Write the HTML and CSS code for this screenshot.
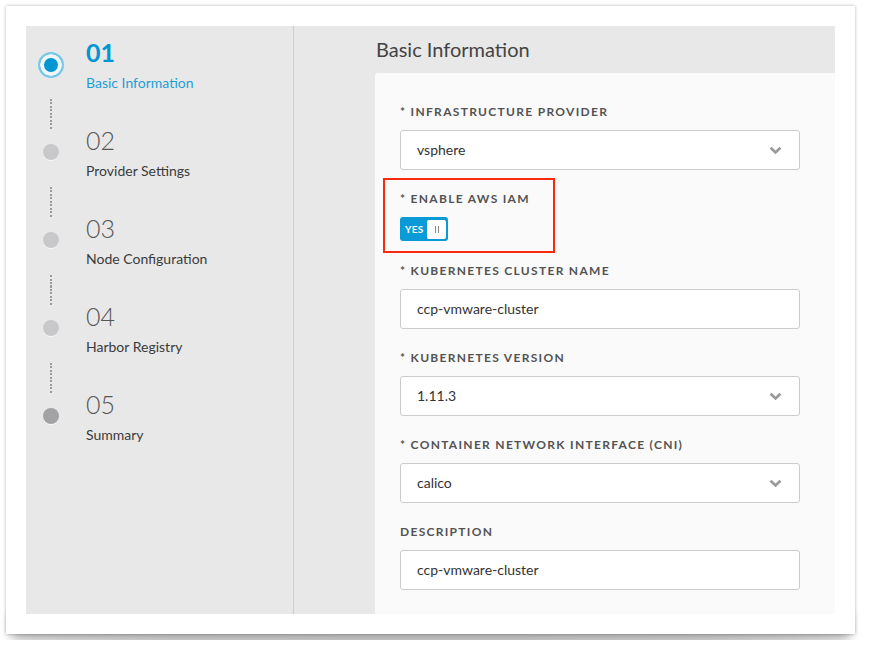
FILE: index.html
```html
<!DOCTYPE html>
<html lang="en">
<head>
<meta charset="utf-8">
<title>Basic Information</title>
<link rel="stylesheet" href="styles.css">
</head>
<body>
<div class="page">
  <div class="sheet">
    <div class="wizard">
      <aside class="steps">
        <div class="step active">
          <div class="rail"><span class="marker"></span><span class="connector"></span></div>
          <div class="step-text"><div class="step-num">01</div><div class="step-label">Basic Information</div></div>
        </div>
        <div class="step">
          <div class="rail"><span class="marker"></span><span class="connector"></span></div>
          <div class="step-text"><div class="step-num">02</div><div class="step-label">Provider Settings</div></div>
        </div>
        <div class="step">
          <div class="rail"><span class="marker"></span><span class="connector"></span></div>
          <div class="step-text"><div class="step-num">03</div><div class="step-label">Node Configuration</div></div>
        </div>
        <div class="step">
          <div class="rail"><span class="marker"></span><span class="connector"></span></div>
          <div class="step-text"><div class="step-num">04</div><div class="step-label">Harbor Registry</div></div>
        </div>
        <div class="step last">
          <div class="rail"><span class="marker"></span></div>
          <div class="step-text"><div class="step-num">05</div><div class="step-label">Summary</div></div>
        </div>
      </aside>
      <main class="content">
        <h2 class="title">Basic Information</h2>
        <section class="card">
          <div class="field">
            <div class="label">* Infrastructure Provider</div>
            <div class="input select">vsphere
              <svg class="chevron" width="13" height="9" viewBox="0 0 13 9"><polyline points="1.6,1.8 6.5,6.4 11.4,1.8" fill="none" stroke="#9a9a9a" stroke-width="2.8"/></svg>
            </div>
          </div>
          <div class="field highlight">
            <div class="label">* Enable AWS IAM</div>
            <div class="toggle"><span class="toggle-text">YES</span><span class="knob"><i></i><i></i></span></div>
          </div>
          <div class="field">
            <div class="label">* Kubernetes Cluster Name</div>
            <div class="input">ccp-vmware-cluster</div>
          </div>
          <div class="field">
            <div class="label">* Kubernetes Version</div>
            <div class="input select">1.11.3
              <svg class="chevron" width="13" height="9" viewBox="0 0 13 9"><polyline points="1.6,1.8 6.5,6.4 11.4,1.8" fill="none" stroke="#9a9a9a" stroke-width="2.8"/></svg>
            </div>
          </div>
          <div class="field">
            <div class="label">* Container Network Interface (CNI)</div>
            <div class="input select">calico
              <svg class="chevron" width="13" height="9" viewBox="0 0 13 9"><polyline points="1.6,1.8 6.5,6.4 11.4,1.8" fill="none" stroke="#9a9a9a" stroke-width="2.8"/></svg>
            </div>
          </div>
          <div class="field">
            <div class="label">Description</div>
            <div class="input">ccp-vmware-cluster</div>
          </div>
        </section>
      </main>
    </div>
  </div>
</div>
</body>
</html>
```

FILE: styles.css
```css
* { box-sizing: border-box; }

html {
  background: #ffffff;
}

body {
  margin: 0;
  padding: 0;
  font-family: Lato, "Open Sans", "Liberation Sans", sans-serif;
}

.page {
  padding: 6px;
}

.sheet {
  position: relative;
  width: 849px;
  height: 628px;
  padding: 20px;
  background: #ffffff;
  box-shadow: 0 0 3px rgba(0, 0, 0, 0.3);
}

.sheet::before {
  content: "";
  position: absolute;
  z-index: -1;
  left: 5px;
  right: 5px;
  bottom: 16px;
  height: 30px;
  border-radius: 0 0 50% 50% / 0 0 6px 6px;
  box-shadow: 0 26px 11px rgba(0, 0, 0, 0.32);
}

.wizard {
  display: flex;
  width: 809px;
  height: 588px;
  background: #e8e8e8;
  overflow: hidden;
}

/* ---------- steps sidebar ---------- */

.steps {
  width: 268px;
  flex: none;
  border-right: 1px solid #cfcfcf;
  padding-top: 12px;
}

.step {
  display: flex;
  height: 88px;
}

.rail {
  width: 50px;
  flex: none;
  display: flex;
  flex-direction: column;
  align-items: center;
  padding-top: 18px;
}

.marker {
  display: block;
  width: 16px;
  height: 16px;
  border-radius: 50%;
  background: #c8c8ca;
  box-shadow: 0 1px 0 #f6f6f6;
  flex: none;
}

.step.last .marker {
  background: #a2a2a4;
}

.step.active .rail {
  padding-top: 14px;
}

.step.active .marker {
  width: 26px;
  height: 26px;
  background: #0095d3;
  border: 2px solid #79c9ea;
  box-shadow: inset 0 0 0 4px #eef6fa;
}

.connector {
  display: block;
  flex: none;
  width: 2px;
  height: 31px;
  margin-top: 27px;
  background: repeating-linear-gradient(to bottom, #9c9c9c 0 2px, transparent 2px 3.5px);
}

.step.active .connector {
  margin-top: 21px;
}

.step-text {
  padding-left: 10px;
}

.step-num {
  font-size: 25px;
  line-height: 28px;
  font-weight: 300;
  color: #555555;
}

.step.active .step-num {
  font-weight: 700;
  color: #0095d3;
}

.step-label {
  margin-top: 8px;
  font-size: 14px;
  line-height: 18px;
  color: #3b3b3b;
}

.step.active .step-label {
  color: #1d9fd8;
}

/* ---------- content ---------- */

.content {
  flex: 1;
  min-width: 0;
  display: flex;
  flex-direction: column;
  padding-left: 81px;
}

.title {
  margin: 0;
  height: 47px;
  line-height: 46px;
  font-size: 20px;
  font-weight: 400;
  color: #434343;
  padding-left: 1px;
}

.card {
  flex: 1;
  background: #fafafa;
  border-radius: 3px 0 0 0;
  padding: 31px 0 0 25px;
}

.field {
  margin-bottom: 21px;
}

.label {
  font-size: 12px;
  line-height: 16px;
  font-weight: 700;
  letter-spacing: 1.3px;
  text-transform: uppercase;
  color: #535353;
  margin-bottom: 10px;
  white-space: nowrap;
}

.input {
  position: relative;
  width: 400px;
  height: 40px;
  background: #ffffff;
  border: 1px solid #cccccc;
  border-radius: 3px;
  padding-left: 16px;
  font-size: 14px;
  line-height: 38px;
  color: #333333;
  display: flex;
  align-items: center;
  justify-content: space-between;
  padding-right: 17px;
}

.chevron {
  display: block;
  flex: none;
}

.highlight {
  width: 172px;
  margin: -13px 0 10px -17px;
  padding: 11px 15px 10px 15px;
  border: 2px solid #fb2a0c;
}

.toggle {
  display: flex;
  align-items: center;
  justify-content: space-between;
  width: 48px;
  height: 24px;
  margin-top: 1px;
  background: #0a9ad7;
  border-radius: 3px;
  padding: 0 2px 0 5px;
}

.toggle-text {
  font-size: 10px;
  font-weight: 700;
  color: #ffffff;
  letter-spacing: 0.3px;
}

.knob {
  display: flex;
  align-items: center;
  justify-content: center;
  gap: 2px;
  width: 19px;
  height: 19px;
  background: #ffffff;
  border-radius: 2px;
}

.knob i {
  display: block;
  width: 1px;
  height: 7px;
  background: #8a8a8a;
}
```
